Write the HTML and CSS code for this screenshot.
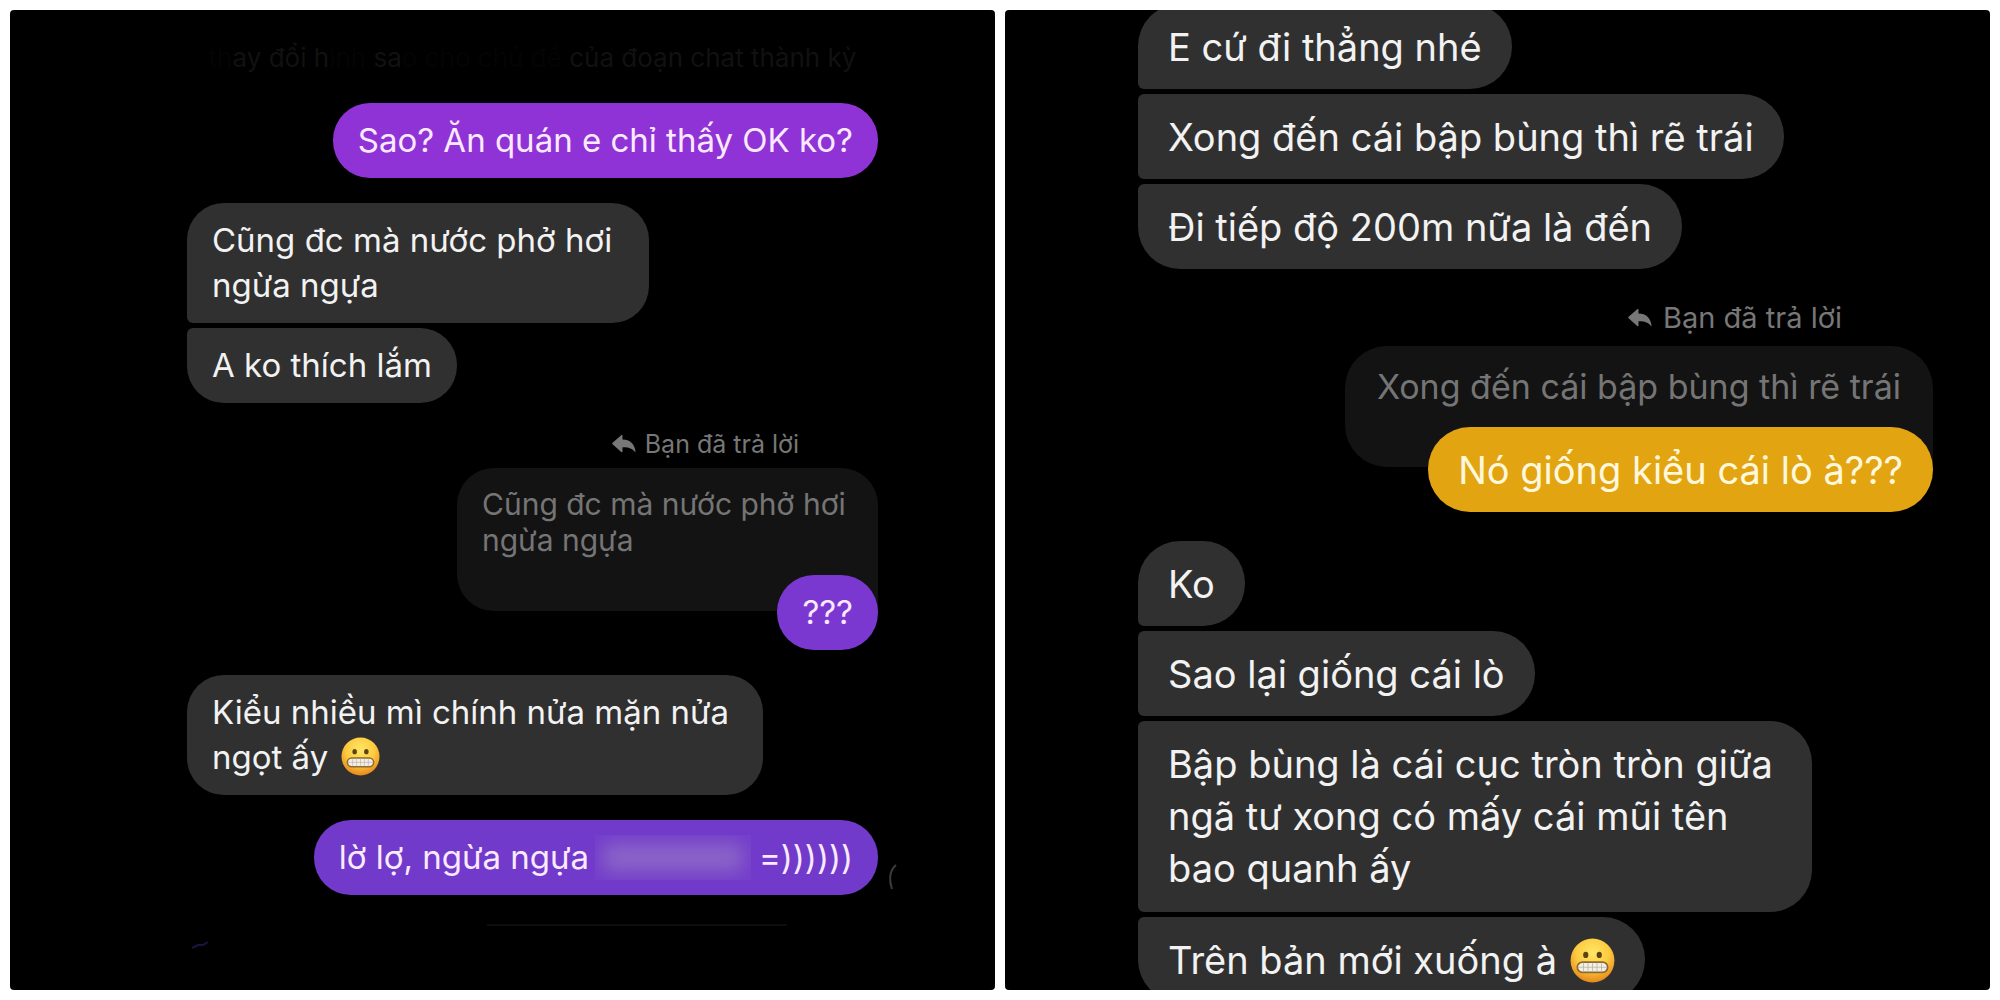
FILE: index.html
```html
<!DOCTYPE html>
<html lang="vi">
<head>
<meta charset="utf-8">
<meta name="viewport" content="width=device-width, initial-scale=1">
<title>Tin nhắn</title>
<link rel="stylesheet" href="styles.css">
</head>
<body>
<svg class="defs" aria-hidden="true">
  <defs>
    <radialGradient id="face" cx="50%" cy="32%" r="68%">
      <stop offset="0" stop-color="#ffe765"/>
      <stop offset="0.55" stop-color="#fdcb40"/>
      <stop offset="1" stop-color="#e5881c"/>
    </radialGradient>
    <symbol id="grimace" viewBox="0 0 40 40">
      <circle cx="20" cy="20" r="19.500" fill="url(#face)"/>
      <ellipse cx="14" cy="15" rx="2.300" ry="2.800" fill="#5e4312"/>
      <ellipse cx="26" cy="15" rx="2.300" ry="2.800" fill="#5e4312"/>
      <rect x="6.500" y="21.500" width="27" height="9" rx="4.500" fill="#f4efe6" stroke="#8d6a2c" stroke-width="1.500"/>
      <path d="M7 26H33M12 22V30M16 22V30M20 22V30M24 22V30M28 22V30" stroke="#b9b3a6" stroke-width="0.700" fill="none"/>
    </symbol>
    <symbol id="reply" viewBox="0 0 24 18">
      <path d="M10.500 0.600V4.600C18 4.800 22.800 8.600 23.600 17.600C20.200 13.400 16.600 12.200 10.500 12.300V16.400C10.500 17.200 9.700 17.400 9.200 16.900L0.600 9.300C0.200 8.900 0.200 8.200 0.600 7.800L9.200 0.200C9.800 -0.300 10.500 0 10.500 0.600Z" fill="currentColor"/>
    </symbol>
  </defs>
</svg>
<main class="gallery">
  <section class="chat chat-small" aria-label="Đoạn chat 1">
    <p class="notice"><span class="lost">th</span>ay đổi h<span class="lost">ình</span> sa<span class="lost">o cho chủ đề</span> của đoạn chat thành kỳ</p>
    <p class="bubble sent violet">Sao? Ăn quán e chỉ thấy OK ko?</p>
    <div class="group">
      <p class="bubble first half">Cũng đc mà nước phở hơi ngừa ngựa</p>
      <p class="bubble last">A ko thích lắm</p>
    </div>
    <div class="reply">
      <p class="label"><svg class="arrow"><use href="#reply"/></svg>Bạn đã trả lời</p>
      <p class="quote">Cũng đc mà nước phở hơi ngừa ngựa</p>
      <p class="bubble sent purple">???</p>
    </div>
    <p class="bubble wide">Kiểu nhiều mì chính nửa mặn nửa ngọt ấy <svg class="emoji" role="img" aria-label="😬"><use href="#grimace"/></svg></p>
    <p class="bubble sent indigo">lờ lợ, ngừa ngựa<span class="redacted"></span>=))))))<svg class="receipt" viewBox="0 0 10 26" aria-hidden="true"><path d="M8 1C1 7 1 17 4 25" fill="none" stroke="#3c3c3c" stroke-width="2"/></svg></p>
    <svg class="remnant" viewBox="0 0 600 30" aria-hidden="true"><path d="M300 5H600" stroke="#0d0d0d" stroke-width="2"/><path d="M5 28L11 25H16L21 22" fill="none" stroke="#1b1340" stroke-width="2"/></svg>
  </section>
  <section class="chat chat-large" aria-label="Đoạn chat 2">
    <div class="group">
      <p class="bubble first">E cứ đi thẳng nhé</p>
      <p class="bubble middle">Xong đến cái bập bùng thì rẽ trái</p>
      <p class="bubble last">Đi tiếp độ 200m nữa là đến</p>
    </div>
    <div class="reply">
      <p class="label"><svg class="arrow"><use href="#reply"/></svg>Bạn đã trả lời</p>
      <p class="quote">Xong đến cái bập bùng thì rẽ trái</p>
      <p class="bubble sent amber">Nó giống kiểu cái lò à???</p>
    </div>
    <div class="group">
      <p class="bubble first">Ko</p>
      <p class="bubble middle">Sao lại giống cái lò</p>
      <p class="bubble middle wide">Bập bùng là cái cục tròn tròn giữa ngã tư xong có mấy cái mũi tên bao quanh ấy</p>
      <p class="bubble last">Trên bản mới xuống à <svg class="emoji" role="img" aria-label="😬"><use href="#grimace"/></svg></p>
    </div>
  </section>
</main>
</body>
</html>
```
FILE: styles.css
```css
* { box-sizing: border-box; }

body {
  margin: 0;
  background: #fff;
  font-family: Inter, "Noto Sans", sans-serif;
}

p { margin: 0; }

.defs {
  position: absolute;
  width: 0;
  height: 0;
}

.gallery {
  display: grid;
  grid-template-columns: 1fr 1fr;
  gap: 10px;
  height: 100vh;
  padding: 10px;
}

.chat {
  display: flex;
  flex-direction: column;
  align-items: flex-start;
  overflow: hidden;
  border-radius: 4px;
  background: #000;
  color: #f2f2f2;
}

.chat-small {
  --radius: 37px;
  gap: 25px;
  padding: 28px 117px 0 177px;
  font-size: 33px;
  line-height: 45px;
}

.chat-large {
  --radius: 42px;
  padding: 0 57px 0 133px;
  font-size: 38px;
  line-height: 52px;
}

.notice {
  align-self: center;
  color: #111;
  font-size: 26px;
  line-height: 40px;
}

.notice .lost { color: #040404; }

.group {
  display: flex;
  flex-direction: column;
  align-items: flex-start;
  gap: 5px;
}

.chat-large .group:first-child { margin-top: -6px; }

.bubble {
  flex: none;
  border-radius: var(--radius);
  background: #303030;
}

.chat-small .bubble { padding: 15px 25px; }
.chat-large .bubble { padding: 17px 30px 16px; }

.chat .first { border-bottom-left-radius: 6px; }
.chat .last { border-top-left-radius: 6px; }
.chat .middle {
  border-top-left-radius: 6px;
  border-bottom-left-radius: 6px;
}

.half { width: 462px; }
.chat-small .wide { width: 576px; }
.chat-large .wide {
  width: 674px;
  padding-bottom: 18px;
}

.sent {
  align-self: flex-end;
  color: #fbeaff;
}

.violet { background: #9033d6; }
.purple { background: #7b38d0; }
.indigo {
  position: relative;
  background: #713acb;
}
.amber {
  background: #e3a412;
  color: #fff8dc;
}

.reply {
  display: flex;
  flex-direction: column;
  align-self: flex-end;
  align-items: flex-end;
}

.label {
  display: flex;
  align-items: center;
  color: #777;
}

.arrow {
  width: 24px;
  height: 18px;
}

.chat-small .label {
  gap: 9px;
  margin-right: 79px;
  padding-bottom: 8px;
  font-size: 25px;
  line-height: 32px;
}

.chat-large .label {
  gap: 11px;
  margin: 28px 91px 0 0;
  padding-bottom: 7px;
  font-size: 29px;
  line-height: 42px;
}

.quote {
  border-radius: var(--radius) var(--radius) 0 var(--radius);
  background: #131313;
  color: #757575;
}

.chat-small .quote {
  width: 421px;
  padding: 18px 25px 53px;
  font-size: 30px;
  line-height: 36px;
}

.chat-large .quote {
  padding: 18px 32px 57px;
  font-size: 34px;
  line-height: 46px;
}

.chat-small .quote + .bubble { margin-top: -36px; }
.chat-large .quote + .bubble { margin-top: -40px; }
.chat-large .reply + .group { margin-top: 29px; }

.emoji {
  width: 39px;
  height: 39px;
  margin-left: 4px;
  vertical-align: -7px;
}

.chat-large .emoji {
  width: 45px;
  height: 45px;
  margin-left: 2px;
  vertical-align: -9px;
}

/* Name hidden by a soft smudge */
.redacted {
  display: inline-block;
  width: 156px;
  height: 45px;
  margin: 0 8px 0 6px;
  background: #8b64c8;
  box-shadow: inset 0 0 18px 8px #733dca;
  vertical-align: top;
}

.receipt {
  position: absolute;
  right: -20px;
  bottom: 5px;
  width: 10px;
  height: 26px;
}

.remnant {
  width: 600px;
  height: 30px;
}
```
